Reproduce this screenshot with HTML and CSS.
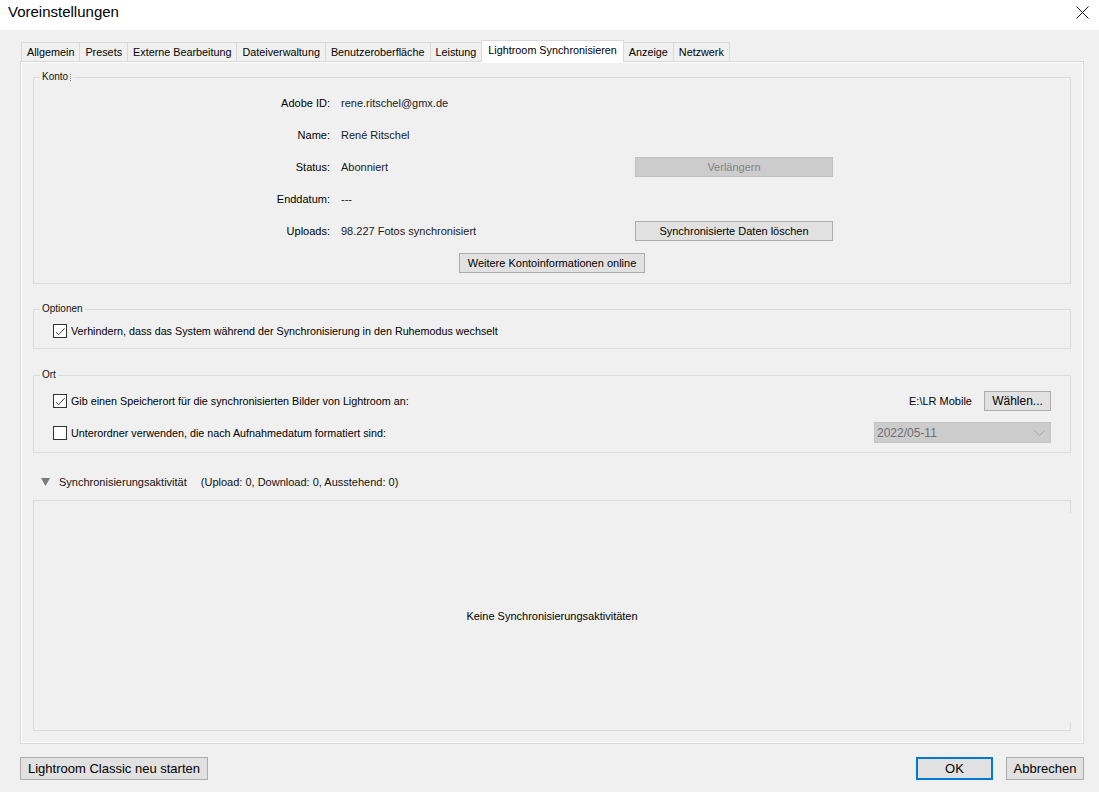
FILE: index.html
```html
<!DOCTYPE html>
<html lang="de">
<head>
  <meta charset="UTF-8">
  <title>Voreinstellungen</title>
  <link rel="stylesheet" href="styles.css">
</head>
<body>

  <div class="titlebar">
    <span class="title">Voreinstellungen</span>
    <svg class="close" width="13" height="13" viewBox="0 0 13 13">
      <path d="M0.5 0.5 L12.5 12.5 M12.5 0.5 L0.5 12.5" stroke="#111" stroke-width="1" fill="none"/>
    </svg>
  </div>

  <div class="dialog">
    <div class="tabs">
      <div class="tab first">Allgemein</div>
      <div class="tab">Presets</div>
      <div class="tab">Externe Bearbeitung</div>
      <div class="tab">Dateiverwaltung</div>
      <div class="tab">Benutzeroberfläche</div>
      <div class="tab">Leistung</div>
      <div class="tab active">Lightroom Synchronisieren</div>
      <div class="tab">Anzeige</div>
      <div class="tab">Netzwerk</div>
    </div>

    <div class="panel">
      <!-- Konto -->
      <fieldset class="group konto">
        <legend>Konto<span class="caret"></span></legend>
        <div class="account-grid">
          <div class="label">Adobe ID:</div>
          <div class="value">rene.ritschel@gmx.de</div>
          <div></div>

          <div class="label">Name:</div>
          <div class="value">René Ritschel</div>
          <div></div>

          <div class="label">Status:</div>
          <div class="value">Abonniert</div>
          <button class="btn disabled">Verlängern</button>

          <div class="label">Enddatum:</div>
          <div class="value">---</div>
          <div></div>

          <div class="label">Uploads:</div>
          <div class="value">98.227 Fotos synchronisiert</div>
          <button class="btn">Synchronisierte Daten löschen</button>
        </div>
        <div class="center-row">
          <button class="btn more">Weitere Kontoinformationen online</button>
        </div>
      </fieldset>

      <!-- Optionen -->
      <fieldset class="group optionen">
        <legend>Optionen</legend>
        <div class="check-row">
          <span class="check checked">
            <svg width="13" height="13" viewBox="0 0 13 13"><path d="M2 7 L5 10 L11.5 3" stroke="#333" stroke-width="1" fill="none"/></svg>
          </span>
          <span class="check-label">Verhindern, dass das System während der Synchronisierung in den Ruhemodus wechselt</span>
        </div>
      </fieldset>

      <!-- Ort -->
      <fieldset class="group ort">
        <legend>Ort</legend>
        <div class="check-row">
          <span class="check checked">
            <svg width="13" height="13" viewBox="0 0 13 13"><path d="M2 7 L5 10 L11.5 3" stroke="#333" stroke-width="1" fill="none"/></svg>
          </span>
          <span class="check-label grow">Gib einen Speicherort für die synchronisierten Bilder von Lightroom an:</span>
          <span class="path">E:\LR Mobile</span>
          <button class="btn choose">Wählen...</button>
        </div>
        <div class="check-row second">
          <span class="check"></span>
          <span class="check-label grow">Unterordner verwenden, die nach Aufnahmedatum formatiert sind:</span>
          <div class="select">
            <span>2022/05-11</span>
            <svg width="11" height="6" viewBox="0 0 11 6"><path d="M0.5 0.5 L5.5 5.5 L10.5 0.5" stroke="#a8a8a8" stroke-width="1" fill="none"/></svg>
          </div>
        </div>
      </fieldset>

      <!-- Synchronisierungsaktivität -->
      <div class="activity-head">
        <svg width="9" height="8" viewBox="0 0 9 8"><polygon points="0,0 9,0 4.5,8" fill="#7b7b7b"/></svg>
        <span class="activity-title">Synchronisierungsaktivität</span>
        <span>(Upload: 0, Download: 0, Ausstehend: 0)</span>
      </div>
      <div class="activity-box">
        <span>Keine Synchronisierungsaktivitäten</span>
      </div>
    </div>

    <div class="footer">
      <button class="btn big restart">Lightroom Classic neu starten</button>
      <div class="footer-right">
        <button class="btn big ok">OK</button>
        <button class="btn big cancel">Abbrechen</button>
      </div>
    </div>
  </div>

</body>
</html>
```

FILE: styles.css
```css
body {
  margin: 0;
  background-color: #f0f0f0;
  font-family: "Liberation Sans", Arial, sans-serif;
  font-size: 11px;
  color: #1a1a1a;
}

/* Title bar */
.titlebar {
  height: 30px;
  background-color: #fff;
  display: flex;
  justify-content: space-between;
  align-items: flex-start;
  padding: 3px 10px 0 8px;
  box-sizing: border-box;
}

.title {
  font-size: 15px;
  line-height: 18px;
  color: #000;
}

.close {
  margin-top: 3px;
}

.dialog {
  padding: 10px 15px 0 20px;
}

/* Tabs */
.tabs {
  display: flex;
  align-items: flex-end;
  height: 21px;
  padding-left: 1px;
}

.tab {
  height: 19px;
  line-height: 18px;
  padding: 0 5px;
  font-size: 10.8px;
  border: 1px solid #d9d9d9;
  border-left: none;
  border-bottom: none;
  box-sizing: border-box;
  background-color: #f0f0f0;
  color: #000;
  white-space: nowrap;
}

.tab.first {
  border-left: 1px solid #d9d9d9;
}

.tab.active {
  height: 22px;
  line-height: 19px;
  padding: 0 6px;
  background-color: #fff;
  border-left: 1px solid #d9d9d9;
  margin-left: -1px;
  margin-bottom: -1px;
  position: relative;
  z-index: 1;
}

/* Panel */
.panel {
  width: 1064px;
  box-sizing: border-box;
  border: 1px solid #d9d9d9;
  box-shadow: inset 0 0 0 1px #fff;
  padding: 9px 12px 12px;
}

.group {
  margin: 0;
  padding: 0;
  min-width: 0;
  border: 1px solid #dcdcdc;
}

.group legend {
  font-size: 10px;
  line-height: 12px;
  padding: 0 2px;
  margin-left: 6px;
  color: #111;
}

.caret {
  display: inline-block;
  width: 0;
  height: 7px;
  border-left: 1px dotted #888;
  margin-left: 2px;
  vertical-align: -1px;
}

.konto {
  padding: 4px 0 10px;
}

.optionen {
  margin-top: 19px;
  padding: 6px 0 7px;
}

.ort {
  margin-top: 20px;
  padding: 10px 0 9px;
}

.account-grid {
  display: grid;
  grid-template-columns: 296px 283px 198px;
  grid-auto-rows: 32px;
  column-gap: 11px;
  align-items: center;
}

.label {
  text-align: right;
  color: #000;
}

.center-row {
  display: flex;
  justify-content: center;
  margin-top: 6px;
}

/* Buttons */
.btn {
  font-family: inherit;
  font-size: 11px;
  height: 20px;
  padding: 0;
  background-color: #e1e1e1;
  border: 1px solid #adadad;
  color: #000;
  box-sizing: border-box;
  white-space: nowrap;
}

.btn.disabled {
  background-color: #cccccc;
  border-color: #bfbfbf;
  color: #838383;
}

.btn.more {
  width: 186px;
}

.btn.choose {
  width: 67px;
  margin-left: 12px;
  font-size: 12px;
}

.btn.big {
  font-size: 13px;
  height: 23px;
}

.btn.restart {
  width: 188px;
}

.btn.ok {
  width: 77px;
  border: 2px solid #0078d7;
}

.btn.cancel {
  width: 78px;
}

/* Checkboxes */
.check-row {
  display: flex;
  align-items: center;
  height: 20px;
  padding: 0 19px;
}

.check-row.second {
  height: 21px;
  margin-top: 11px;
}

.check {
  width: 14px;
  height: 14px;
  border: 1px solid #333;
  background-color: #fff;
  box-sizing: border-box;
  flex: none;
  display: flex;
}

.check-label {
  margin-left: 4px;
  font-size: 10.75px;
  color: #000;
}

.grow {
  flex: 1;
}

.path {
  font-size: 11px;
  color: #000;
}

.select {
  width: 177px;
  height: 21px;
  box-sizing: border-box;
  background-color: #cccccc;
  border: 1px solid #c4c4c4;
  color: #6d6d6d;
  font-size: 12px;
  display: flex;
  justify-content: space-between;
  align-items: center;
  padding: 0 5px 0 2px;
}

/* Activity */
.activity-head {
  display: flex;
  align-items: center;
  height: 16px;
  margin-top: 21px;
  padding-left: 8px;
  color: #111;
}

.activity-head svg {
  margin-right: 9px;
}

.activity-title {
  margin-right: 14px;
}

.activity-box {
  margin-top: 10px;
  height: 231px;
  box-sizing: border-box;
  border: 1px solid #dcdcdc;
  border-right-color: transparent;
  display: flex;
  align-items: center;
  justify-content: center;
  color: #000;
  position: relative;
}

.activity-box::before,
.activity-box::after {
  content: "";
  position: absolute;
  right: -1px;
  width: 1px;
  background-color: #dcdcdc;
}

.activity-box::before {
  top: -1px;
  height: 13px;
}

.activity-box::after {
  bottom: -1px;
  height: 9px;
}

/* Footer */
.footer {
  display: flex;
  justify-content: space-between;
  margin-top: 13px;
  width: 1064px;
}

.footer-right {
  display: flex;
  gap: 13px;
}
```
